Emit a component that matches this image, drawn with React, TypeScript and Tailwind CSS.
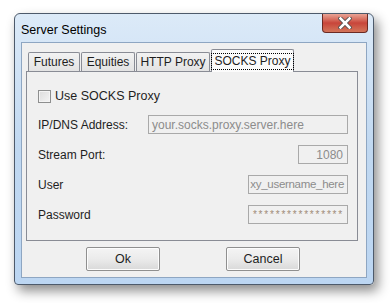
import React from "react";

const font = { fontFamily: '"Liberation Sans", Arial, sans-serif' };

function Tab({ label, active, w }: { label: string; active?: boolean; w: string }) {
  if (active) {
    return (
      <div className={`${w} h-[23px] -mb-px relative z-10 flex items-center justify-center whitespace-nowrap border border-b-0 border-[#898c95] bg-[#fbfbfb] rounded-t-[2px]`}>
        <span className="px-[2px] leading-[15px] border border-dotted border-black">{label}</span>
      </div>
    );
  }
  return (
    <div className={`${w} h-[19px] flex items-center justify-center whitespace-nowrap border border-b-0 border-[#898c95] bg-gradient-to-b from-[#f2f2f2] to-[#e3e3e3] rounded-t-[2px]`}>
      {label}
    </div>
  );
}

function Field({ label, box, children }: { label: string; box: string; children: React.ReactNode }) {
  return (
    <div className="flex items-center justify-between h-[19px]">
      <span className="text-[#1e1e1e]">{label}</span>
      <div className={`${box} h-[19px] border border-[#a9a9a9] bg-[#f0f0f0] text-[#8c8c8c] flex items-center overflow-hidden whitespace-nowrap`}>
        {children}
      </div>
    </div>
  );
}

function Btn({ label }: { label: string }) {
  return (
    <button className="w-[74px] h-[24px] border border-[#8f8f8f] rounded-[2px] bg-gradient-to-b from-[#f4f4f4] via-[#ebebeb] to-[#d9d9d9] text-[#1e1e1e] text-[12.5px] shadow-[inset_0_0_0_1px_#fcfcfc]">
      {label}
    </button>
  );
}

export default function App() {
  return (
    <div className="w-[390px] h-[303px] bg-white pt-[13px] pl-[14px] text-[12px]" style={font}>
      <div className="w-[360px] h-[272px] rounded-t-[6px] rounded-b-[4px] border border-[#4d5a6b] bg-gradient-to-b from-[#dceaf8] via-[#c0d8f1] to-[#bcd6f2] shadow-[4px_6px_12px_rgba(0,0,0,0.45)] flex flex-col">
        <div className="h-[28px] flex items-start justify-between pl-[6px]">
          <span className="mt-[7px] text-[12.5px] text-black">Server Settings</span>
          <div className="mr-[5px] w-[46px] h-[19px] rounded-b-[4px] border border-t-0 border-[#6b2a23] bg-gradient-to-b from-[#e8a395] via-[#c8453a] to-[#d2745a] flex items-center justify-center">
            <svg width="14" height="12" viewBox="0 0 14 12">
              <path d="M2.5 1.5 L11.5 10.5 M11.5 1.5 L2.5 10.5" stroke="#4a4a4a" strokeWidth="4.2" strokeLinecap="square" />
              <path d="M2.5 1.5 L11.5 10.5 M11.5 1.5 L2.5 10.5" stroke="#ffffff" strokeWidth="2.6" strokeLinecap="square" />
            </svg>
          </div>
        </div>
        <div className="mx-[6px] h-[236px] border border-[#8ea6c2] bg-[#f0f0f0] flex flex-col px-[4px] pt-[6px]">
          <div className="flex items-end gap-px pl-[2px] text-[#1e1e1e] text-[12px]">
            <Tab label="Futures" w="w-[52px]" />
            <Tab label="Equities" w="w-[54px]" />
            <Tab label="HTTP Proxy" w="w-[74px]" />
            <Tab label="SOCKS Proxy" w="w-[83px]" active />
          </div>
          <div className="w-[332px] h-[170px] border border-[#898c95] bg-[#f0f0f0] flex flex-col pt-[18px] pl-[11px] pr-[9px]">
            <div className="flex items-center gap-[4px] h-[13px] text-[#1e1e1e]">
              <div className="w-[13px] h-[13px] border border-[#8e8f8f] bg-gradient-to-br from-[#dcdcdc] to-[#f4f4f4] shadow-[inset_0_0_0_1px_#f4f4f4]" />
              <span className="text-[12.5px]">Use SOCKS Proxy</span>
            </div>
            <div className="flex flex-col gap-[11px] mt-[12px] pl-0">
              <Field label="IP/DNS Address:" box="w-[200px] pl-[3px]">your.socks.proxy.server.here</Field>
              <Field label="Stream Port:" box="w-[50px] justify-end pr-[4px]">1080</Field>
              <Field label="User" box="w-[100px] justify-end pr-[3px]">
                <span className="text-[11.5px] tracking-[-0.3px]">xy_username_here</span>
              </Field>
              <Field label="Password" box="w-[100px] justify-end pr-[3px]">
                <span className="text-[10px] tracking-[1.8px] text-[#a08c78]">****************</span>
              </Field>
            </div>
          </div>
          <div className="flex justify-center gap-[66px] mt-[6px] pr-[2px]">
            <Btn label="Ok" />
            <Btn label="Cancel" />
          </div>
        </div>
      </div>
    </div>
  );
}
